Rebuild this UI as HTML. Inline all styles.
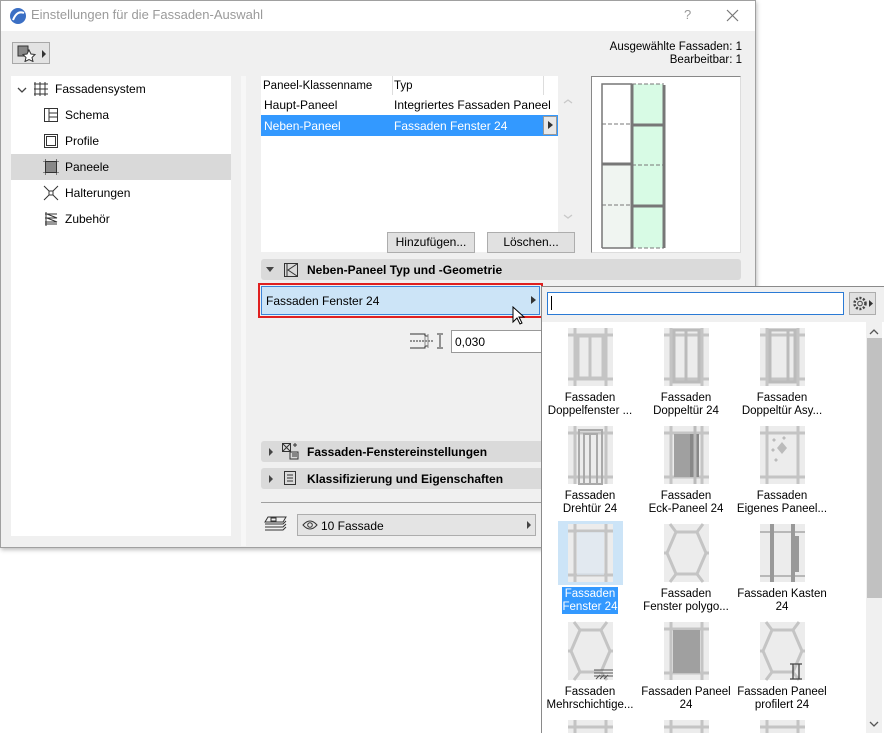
<!DOCTYPE html>
<html style="overflow:hidden"><head><meta charset="utf-8"><style>
*{box-sizing:border-box;margin:0;padding:0}
html,body{width:884px;height:733px;overflow:hidden}
body{background:#fff;font-family:"Segoe UI","Liberation Sans",sans-serif;font-size:12px;color:#000;position:relative}
.a{position:absolute}
.t{white-space:nowrap;line-height:16px}
.sec{position:absolute;left:261px;width:480px;height:21px;background:#dadada;border-radius:3px;font-weight:bold;line-height:21px}
.tri{position:absolute;width:0;height:0}
.lbl{position:absolute;width:96px;text-align:center;font-size:11.5px;line-height:13px}
</style></head><body>
<div class="a" style="left:0;top:0;width:756px;height:548px;border:1px solid #a0a0a0;background:#f0f0f0;box-shadow:1px 2px 4px rgba(0,0,0,.25)"></div>
<div class="a" style="left:1px;top:1px;width:754px;height:30px;background:#fff"></div>
<svg class="a" style="left:9px;top:7px" width="18" height="18"><circle cx="9" cy="9" r="8" fill="#3b6fc4"/><path d="M4 13 Q8 3 15 6" stroke="#fff" stroke-width="2" fill="none"/></svg>
<div class="a t" style="left:31px;top:7px;font-size:13px;color:#9a9a9a">Einstellungen für die Fassaden-Auswahl</div>
<div class="a" style="left:684px;top:7px;font-size:13px;color:#999">?</div>
<svg class="a" style="left:726px;top:9px" width="13" height="13"><path d="M1 1L12 12M12 1L1 12" stroke="#777" stroke-width="1.2"/></svg>
<div class="a" style="left:12px;top:42px;width:38px;height:22px;border:1px solid #a8a8a8;background:#e3e3e3"></div>
<svg class="a" style="left:15px;top:44px" width="34" height="18"><rect x="3" y="2" width="10" height="10" fill="#888" stroke="#333"/><path d="M14 6l2 4 4 .5-3 3 1 4-4-2-4 2 1-4-3-3 4-.5z" fill="#fff" stroke="#333"/><path d="M27 6l4 4-4 4z" fill="#333"/></svg>
<div class="a t" style="right:142px;top:41px;text-align:right;font-size:11.5px;line-height:13px">Ausgewählte Fassaden: 1<br>Bearbeitbar: 1</div>
<div class="a" style="left:11px;top:76px;width:220px;height:460px;background:#fff"></div>
<div class="a" style="left:11px;top:154px;width:220px;height:26px;background:#d9d9d9"></div>
<svg class="a" style="left:17px;top:85px" width="12" height="10"><path d="M1 3l4 4 4-4" stroke="#444" fill="none" stroke-width="1.3"/></svg>
<svg class="a" style="left:33px;top:81px" width="16" height="16"><path d="M2 1v14M7 1v14M12 1v14M1 3h14M1 8h14M1 13h14" stroke="#333" fill="none"/></svg>
<div class="a t" style="left:55px;top:81px">Fassadensystem</div>
<svg class="a" style="left:43px;top:107px" width="16" height="16"><rect x="1.5" y="1.5" width="13" height="13" fill="none" stroke="#333"/><path d="M6 1.5v13M6 6h8.5M6 10h8.5" stroke="#333"/></svg>
<div class="a t" style="left:65px;top:107px">Schema</div>
<svg class="a" style="left:43px;top:133px" width="16" height="16"><rect x="1.5" y="1.5" width="13" height="13" fill="none" stroke="#333"/><rect x="3.5" y="3.5" width="9" height="9" fill="none" stroke="#333"/></svg>
<div class="a t" style="left:65px;top:133px">Profile</div>
<svg class="a" style="left:43px;top:159px" width="16" height="16"><rect x="2.5" y="2.5" width="11" height="11" fill="#888" stroke="#333"/><path d="M0 2.5h16M0 13.5h16M2.5 0v16M13.5 0v16" stroke="#333" stroke-width=".6"/></svg>
<div class="a t" style="left:65px;top:159px">Paneele</div>
<svg class="a" style="left:43px;top:185px" width="16" height="16"><rect x="6" y="6" width="4" height="4" fill="none" stroke="#333"/><path d="M1 1l5 5M15 1l-5 5M1 15l5-5M15 15l-5-5" stroke="#333"/></svg>
<div class="a t" style="left:65px;top:185px">Halterungen</div>
<svg class="a" style="left:43px;top:211px" width="16" height="16"><path d="M2 3h12M4 3l10 4H2M4 7l10 4H2M2 13h12M3 1v14" stroke="#333" fill="none"/></svg>
<div class="a t" style="left:65px;top:211px">Zubehör</div>
<div class="a" style="left:241px;top:76px;width:5px;height:470px;background:#f7f7f7"></div>
<div class="a" style="left:261px;top:76px;width:297px;height:176px;background:#fff"></div>
<div class="a" style="left:392px;top:76px;width:1px;height:19px;background:#ddd"></div>
<div class="a" style="left:543px;top:76px;width:1px;height:19px;background:#ddd"></div>
<div class="a t" style="left:263px;top:78px;font-size:11.5px">Paneel-Klassenname</div>
<div class="a t" style="left:394px;top:78px;font-size:11.5px">Typ</div>
<div class="a t" style="left:264px;top:97px">Haupt-Paneel</div>
<div class="a t" style="left:394px;top:97px">Integriertes Fassaden Paneel</div>
<div class="a" style="left:261px;top:115px;width:297px;height:21px;background:#3399ff"></div>
<div class="a t" style="left:264px;top:118px;color:#fff">Neben-Paneel</div>
<div class="a t" style="left:394px;top:118px;color:#fff">Fassaden Fenster 24</div>
<div class="a" style="left:543px;top:116px;width:14px;height:19px;background:#e8e8e8;border:1px solid #999"></div>
<div class="tri" style="left:548px;top:121px;border-left:5px solid #333;border-top:4px solid transparent;border-bottom:4px solid transparent"></div>
<svg class="a" style="left:562px;top:97px" width="12" height="124"><path d="M2 6l4-3 4 3M2 118l4 3 4-3" stroke="#c8c8c8" fill="none" stroke-width="1.3"/></svg>
<div class="a" style="left:387px;top:232px;width:88px;height:21px;border:1px solid #adadad;background:#e1e1e1;text-align:center;line-height:19px">Hinzufügen...</div>
<div class="a" style="left:487px;top:232px;width:88px;height:21px;border:1px solid #adadad;background:#e1e1e1;text-align:center;line-height:19px">Löschen...</div>
<div class="a" style="left:591px;top:76px;width:150px;height:177px;background:#fff;border:1px solid #888;border-right-color:#ddd;border-bottom-color:#ddd"></div>
<svg class="a" style="left:600px;top:82px" width="70" height="170">
<rect x="2" y="2" width="30" height="80" fill="#fff"/><rect x="2" y="82" width="30" height="84" fill="#f0f5f1"/><rect x="32" y="2" width="31" height="164" fill="#d8fbe5"/>
<path d="M2 166V2h30M32 2v164H2" stroke="#777" stroke-width="1.5" fill="none"/>
<path d="M32 2v164" stroke="#777" stroke-width="3"/><path d="M64 3v163" stroke="#777" stroke-width="3"/>
<path d="M2 82h30M32 43h32M32 124h32" stroke="#777" stroke-width="3"/>
<path d="M2 42h30M2 123h30M32 2h32M32 83h32M32 166h32" stroke="#777" stroke-dasharray="4 2"/>
</svg>
<div class="sec" style="top:259px"></div>
<div class="tri" style="left:266px;top:267px;border-top:5px solid #444;border-left:4px solid transparent;border-right:4px solid transparent"></div>
<svg class="a" style="left:283px;top:262px" width="16" height="16"><rect x="1.5" y="1.5" width="13" height="13" fill="none" stroke="#333"/><path d="M4 1.5v13M14 2L5 8l9 6" stroke="#333" fill="none"/></svg>
<div class="a t" style="left:307px;top:262px;font-weight:bold">Neben-Paneel Typ und -Geometrie</div>
<div class="a" style="left:258px;top:283px;width:285px;height:35px;border:2px solid #e02020"></div>
<div class="a" style="left:261px;top:286px;width:279px;height:29px;background:#cce4f7;border:1px solid #3b84d9"></div>
<div class="a t" style="left:266px;top:293px">Fassaden Fenster 24</div>
<div class="tri" style="left:531px;top:296px;border-left:5px solid #333;border-top:4px solid transparent;border-bottom:4px solid transparent"></div>
<svg class="a" style="left:512px;top:306px" width="14" height="20"><path d="M1 1v15l4-4 3 6 2-1-3-6h5z" fill="#fff" stroke="#000"/></svg>
<svg class="a" style="left:409px;top:332px" width="36" height="18"><path d="M1 2h15v2h3M1 16h15v-2h3" stroke="#333" fill="none"/><path d="M1 9h24" stroke="#333" stroke-dasharray="2 1"/><path d="M16 4v10M19 2v14" stroke="#888"/><path d="M28 2h6M28 16h6M31 3v12" stroke="#333"/></svg>
<div class="a" style="left:451px;top:330px;width:91px;height:23px;background:#fff;border:1px solid #999"></div>
<div class="a t" style="left:455px;top:334px">0,030</div>
<div class="sec" style="top:441px"></div>
<div class="tri" style="left:269px;top:448px;border-left:4px solid #444;border-top:4px solid transparent;border-bottom:4px solid transparent"></div>
<svg class="a" style="left:281px;top:442px" width="18" height="18"><rect x="1.5" y="1.5" width="8" height="8" fill="none" stroke="#333"/><path d="M1.5 1.5l8 8M9.5 1.5l-8 8M12 3h4M14 1v4M9 10h8v7H9zM11 12h5M11 14h5" stroke="#333" fill="none"/></svg>
<div class="a t" style="left:307px;top:444px;font-weight:bold">Fassaden-Fenstereinstellungen</div>
<div class="sec" style="top:468px"></div>
<div class="tri" style="left:269px;top:475px;border-left:4px solid #444;border-top:4px solid transparent;border-bottom:4px solid transparent"></div>
<svg class="a" style="left:283px;top:470px" width="14" height="16"><rect x="1.5" y="1.5" width="11" height="13" fill="none" stroke="#333"/><path d="M4 5h6M4 8h6M4 11h6" stroke="#333"/></svg>
<div class="a t" style="left:307px;top:471px;font-weight:bold">Klassifizierung und Eigenschaften</div>
<div class="a" style="left:261px;top:502px;width:280px;height:1px;background:#a0a0a0"></div>
<svg class="a" style="left:262px;top:515px" width="28" height="20"><path d="M6 2h18l-3 5H3zM3 9h18l3-3M3 12h18l3-3M3 15h18l3-3" stroke="#333" fill="none"/><rect x="9" y="3" width="5" height="3" fill="none" stroke="#333"/></svg>
<div class="a" style="left:297px;top:514px;width:239px;height:22px;background:#e4e4e4;border:1px solid #adadad"></div>
<svg class="a" style="left:302px;top:519px" width="16" height="12"><path d="M1 6Q8-2 15 6Q8 14 1 6z" fill="none" stroke="#333"/><circle cx="8" cy="6" r="2.3" fill="none" stroke="#333"/></svg>
<div class="a t" style="left:321px;top:518px">10 Fassade</div>
<div class="tri" style="left:527px;top:521px;border-left:4px solid #444;border-top:4px solid transparent;border-bottom:4px solid transparent"></div>
<div class="a" style="left:541px;top:286px;width:343px;height:447px;background:#f0f0f0;border:1px solid #8a8a8a;border-right:none;border-bottom:none"></div>
<div class="a" style="left:547px;top:292px;width:297px;height:23px;background:#fff;border:1px solid #2a7ad5"></div>
<div class="a" style="left:551px;top:296px;width:1px;height:14px;background:#000"></div>
<div class="a" style="left:849px;top:292px;width:27px;height:23px;background:#e1e1e1;border:1px solid #adadad"></div>
<svg class="a" style="left:851px;top:294px" width="24" height="19"><circle cx="9" cy="9.5" r="5.5" fill="none" stroke="#444" stroke-width="2.5" stroke-dasharray="2 1.6"/><circle cx="9" cy="9.5" r="2.3" fill="none" stroke="#444"/><path d="M18 6l4 3.5-4 3.5z" fill="#333"/></svg>
<div class="a" style="left:542px;top:322px;width:342px;height:411px;background:#fff"></div>
<div class="a" style="left:866px;top:322px;width:16px;height:411px;background:#f0f0f0"></div>
<div class="a" style="left:867px;top:338px;width:15px;height:260px;background:#c1c1c1"></div>
<svg class="a" style="left:868px;top:326px" width="12" height="404"><path d="M2 8l4-4 4 4M2 396l4 4 4-4" stroke="#555" fill="none" stroke-width="1.3"/></svg>
<div class="a" style="left:558px;top:521px;width:65px;height:64px;background:#cce4f7"></div>
<svg class="a" style="left:542px;top:322px" width="322" height="411">
<defs>
<g id="grid"><rect width="45" height="58" fill="#ececec"/><path d="M0 7h45M0 51h45M7 0v58M38 0v58" stroke="#c4c4c4" stroke-width="3"/></g>
<g id="hex"><rect width="45" height="58" fill="#ececec"/><path d="M12 8h21l9 21-9 21H12L3 29z M12 8L6 0M33 8l6-8M12 50l-6 8M33 50l6 8M3 29H0M42 29h3" stroke="#c4c4c4" stroke-width="3" fill="none"/></g>
</defs>
<g transform="translate(26,6)"><use href="#grid"/><path d="M10 8h25v42H10zM22 8v42" stroke="#c4c4c4" stroke-width="3" fill="none"/></g>
<g transform="translate(122,6)"><use href="#grid"/><path d="M10 2h25v52H10zM22 2v52" stroke="#bbb" stroke-width="3" fill="none"/></g>
<g transform="translate(218,6)"><use href="#grid"/><path d="M10 2h25v52H10zM28 2v52" stroke="#bbb" stroke-width="3" fill="none"/></g>
<g transform="translate(26,104)"><use href="#grid"/><path d="M11 4h23v54H11zM16 8h13v50H16zM22 8v50" stroke="#aaa" stroke-width="2" fill="none"/></g>
<g transform="translate(122,104)"><use href="#grid"/><rect x="10" y="8" width="25" height="43" fill="#a0a0a0"/><rect x="26" y="8" width="9" height="43" fill="#888"/><path d="M31 0v58" stroke="#bbb" stroke-width="3"/></g>
<g transform="translate(218,104)"><use href="#grid"/><path d="M22 16l5 6-5 6-5-6z" fill="#bbb"/><path d="M14 12l2 2-2 2-2-2zM24 10l2 2-2 2-2-2zM13 22l2 2-2 2-2-2zM16 32l2 2-2 2-2-2z" fill="#bbb"/></g>
<g transform="translate(26,202)"><use href="#grid"/><rect x="9" y="8" width="27" height="43" fill="#dce8f3" opacity=".6"/></g>
<g transform="translate(122,202)"><use href="#hex"/></g>
<g transform="translate(218,202)"><rect width="45" height="58" fill="#ececec"/><path d="M0 8h45M0 52h45" stroke="#b8b8b8" stroke-width="2"/><path d="M12 0v58M33 0v58" stroke="#999" stroke-width="4"/><rect x="33" y="12" width="6" height="36" fill="#999"/></g>
<g transform="translate(26,300)"><use href="#hex"/><path d="M26 48h19M26 51h19M26 54h19M28 57l4-4M32 57l4-4M36 57l4-4" stroke="#555" stroke-width="1"/></g>
<g transform="translate(122,300)"><use href="#grid"/><rect x="9" y="8" width="27" height="43" fill="#a0a0a0"/></g>
<g transform="translate(218,300)"><use href="#hex"/><path d="M30 42h12M30 57h12M33 42v15M39 42v15" stroke="#444" fill="#fff" stroke-width="1.3"/></g>
<g transform="translate(26,398)"><use href="#grid"/></g>
<g transform="translate(122,398)"><use href="#grid"/></g>
<g transform="translate(218,398)"><use href="#grid"/></g>
</svg>
<div class="lbl" style="left:542px;top:392px">Fassaden<br>Doppelfenster ...</div>
<div class="lbl" style="left:638px;top:392px">Fassaden<br>Doppeltür 24</div>
<div class="lbl" style="left:734px;top:392px">Fassaden<br>Doppeltür Asy...</div>
<div class="lbl" style="left:542px;top:490px">Fassaden<br>Drehtür 24</div>
<div class="lbl" style="left:638px;top:490px">Fassaden<br>Eck-Paneel 24</div>
<div class="lbl" style="left:734px;top:490px">Fassaden<br>Eigenes Paneel...</div>
<div class="a" style="left:562px;top:587px;width:56px;height:27px;background:#3399ff"></div>
<div class="lbl" style="left:542px;top:588px;color:#fff">Fassaden<br>Fenster 24</div>
<div class="lbl" style="left:638px;top:588px">Fassaden<br>Fenster polygo...</div>
<div class="lbl" style="left:734px;top:588px">Fassaden Kasten<br>24</div>
<div class="lbl" style="left:542px;top:686px">Fassaden<br>Mehrschichtige...</div>
<div class="lbl" style="left:638px;top:686px">Fassaden Paneel<br>24</div>
<div class="lbl" style="left:734px;top:686px">Fassaden Paneel<br>profilert 24</div>
</body></html>
